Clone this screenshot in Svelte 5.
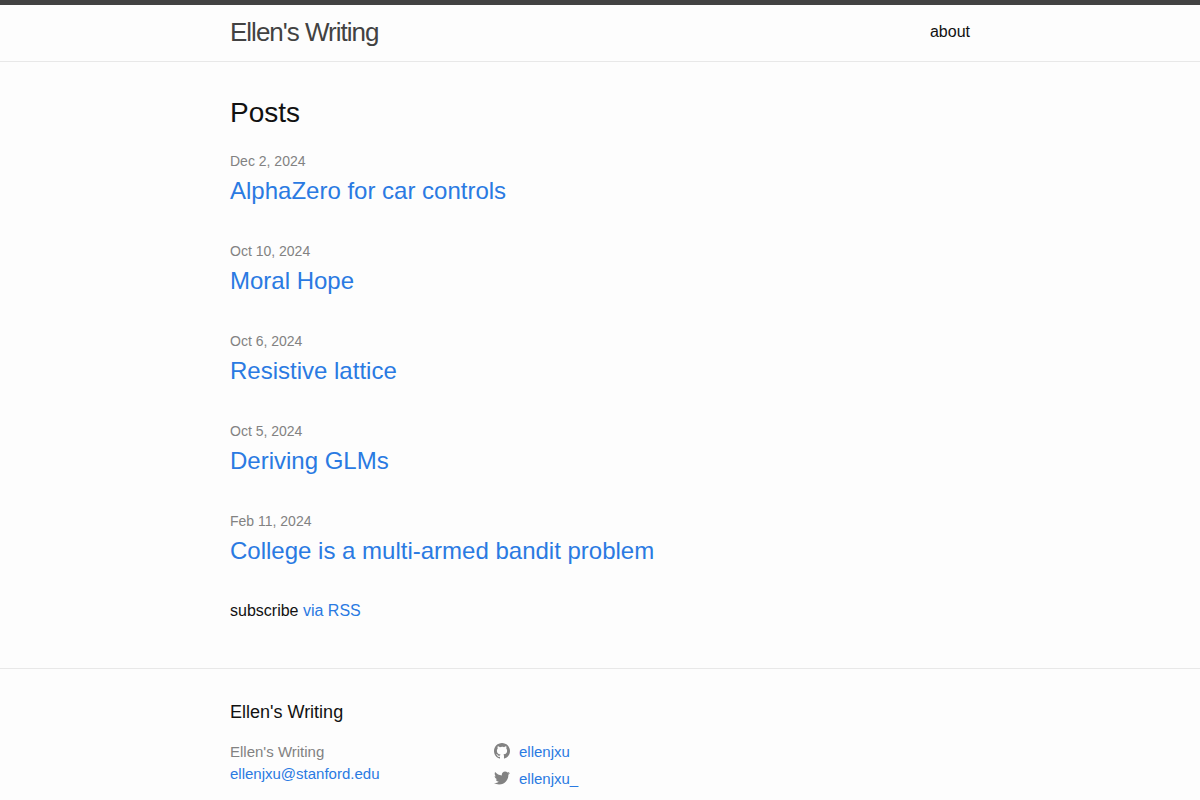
<script>
	const title = "Ellen's Writing";
	const email = 'ellenjxu@stanford.edu';
	const posts = [
		{ date: 'Dec 2, 2024', name: 'AlphaZero for car controls' },
		{ date: 'Oct 10, 2024', name: 'Moral Hope' },
		{ date: 'Oct 6, 2024', name: 'Resistive lattice' },
		{ date: 'Oct 5, 2024', name: 'Deriving GLMs' },
		{ date: 'Feb 11, 2024', name: 'College is a multi-armed bandit problem' }
	];
</script>

<header class="siteHeader">
	<div class="wrapper headerRow">
		<a class="siteTitle" href="#/">{title}</a>
		<nav>
			<a class="pageLink" href="#/about">about</a>
		</nav>
	</div>
</header>

<main class="pageContent">
	<div class="wrapper">
		<h2 class="listHeading">Posts</h2>
		<ul class="postList">
			{#each posts as post}
				<li>
					<span class="postMeta">{post.date}</span>
					<h3><a class="postLink" href="#/post">{post.name}</a></h3>
				</li>
			{/each}
		</ul>
		<p class="subscribe">subscribe <a href="#/feed">via RSS</a></p>
	</div>
</main>

<footer class="siteFooter">
	<div class="wrapper">
		<h2 class="footerHeading">{title}</h2>
		<div class="footerCols">
			<ul class="contactList">
				<li>{title}</li>
				<li><a href="mailto:{email}">{email}</a></li>
			</ul>
			<ul class="socialList">
				<li>
					<a href="https://github.com/ellenjxu">
						<svg class="icon" viewBox="0 0 16 16" aria-hidden="true"><path fill-rule="evenodd" d="M8 0C3.58 0 0 3.582 0 8c0 3.535 2.292 6.533 5.47 7.59.4.075.547-.172.547-.385 0-.19-.007-.693-.01-1.36-2.226.483-2.695-1.073-2.695-1.073-.364-.924-.889-1.17-.889-1.17-.726-.496.055-.486.055-.486.803.056 1.226.824 1.226.824.714 1.223 1.873.87 2.329.665.072-.517.279-.87.508-1.07-1.777-.201-3.644-.888-3.644-3.953 0-.874.311-1.588.823-2.147-.083-.202-.358-1.015.077-2.117 0 0 .672-.215 2.201.82A7.67 7.67 0 0 1 8 3.868c.68.004 1.365.093 2.004.27 1.527-1.035 2.198-.82 2.198-.82.437 1.102.163 1.915.08 2.117.513.56.823 1.273.823 2.147 0 3.073-1.87 3.75-3.653 3.947.287.246.543.735.543 1.481 0 1.07-.01 1.933-.01 2.195 0 .215.144.463.55.385C13.71 14.53 16 11.534 16 8c0-4.418-3.582-8-8-8" /></svg>
						<span>ellenjxu</span>
					</a>
				</li>
				<li>
					<a href="https://twitter.com/ellenjxu_">
						<svg class="icon" viewBox="0 0 16 16" aria-hidden="true"><path d="M15.969 3.058c-.586.26-1.217.436-1.878.515.675-.405 1.194-1.045 1.438-1.809-.632.375-1.332.647-2.076.793-.596-.636-1.446-1.033-2.387-1.033-1.806 0-3.27 1.464-3.27 3.27 0 .256.029.506.085.745C5.163 5.404 2.753 4.102 1.14 2.124c-.281.482-.443 1.044-.443 1.644 0 1.134.577 2.135 1.455 2.722-.536-.017-1.04-.164-1.481-.409v.041c0 1.584 1.127 2.906 2.623 3.206-.274.075-.563.115-.861.115-.211 0-.416-.021-.615-.059.416 1.299 1.624 2.245 3.055 2.271-1.119.877-2.529 1.4-4.061 1.4-.264 0-.524-.015-.78-.046 1.447.928 3.166 1.469 5.013 1.469 6.015 0 9.304-4.983 9.304-9.304 0-.142-.003-.283-.009-.423.639-.461 1.193-1.037 1.632-1.692z" /></svg>
						<span>ellenjxu_</span>
					</a>
				</li>
			</ul>
		</div>
	</div>
</footer>

<style>
	:global(body) {
		margin: 0;
		color: #111;
		background-color: #fdfdfd;
		font: 16px/24px "Liberation Sans", Arial, sans-serif;
	}
	a {
		color: #2a7ae2;
		text-decoration: none;
	}
	a:hover {
		text-decoration: underline;
	}
	h2, h3, ul, p {
		margin: 0;
		padding: 0;
		font-weight: 400;
	}
	ul {
		list-style: none;
	}
	.wrapper {
		max-width: 740px;
		margin: 0 auto;
		padding: 0 30px;
	}
	.siteHeader {
		border-top: 5px solid #424242;
		border-bottom: 1px solid #e8e8e8;
	}
	.headerRow {
		display: flex;
		justify-content: space-between;
		line-height: 54px;
		padding-bottom: 2px;
	}
	.siteTitle {
		font-size: 26px;
		letter-spacing: -1px;
		color: #424242;
	}
	.pageLink {
		color: #111;
	}
	.pageContent {
		padding: 30px 0;
	}
	.listHeading {
		font-size: 28px;
		line-height: 42px;
		margin-bottom: 15px;
	}
	.postList li {
		margin-bottom: 30px;
	}
	.postMeta {
		display: block;
		font-size: 14px;
		color: #828282;
	}
	.postList h3 {
		font-size: 24px;
		line-height: 36px;
	}
	.postLink {
		display: block;
	}
	.subscribe {
		margin-bottom: 15px;
	}
	.siteFooter {
		border-top: 1px solid #e8e8e8;
		padding: 30px 0;
	}
	.footerHeading {
		font-size: 18px;
		line-height: 27px;
		margin-bottom: 15px;
	}
	.footerCols {
		display: flex;
		gap: 5px;
		font-size: 15px;
		line-height: 22px;
		color: #828282;
	}
	.contactList {
		width: 35%;
	}
	.socialList li {
		margin-bottom: 5px;
	}
	.socialList a {
		display: flex;
		gap: 9px;
	}
	.icon {
		width: 16px;
		height: 16px;
		margin-top: 2px;
		fill: #828282;
	}
</style>
